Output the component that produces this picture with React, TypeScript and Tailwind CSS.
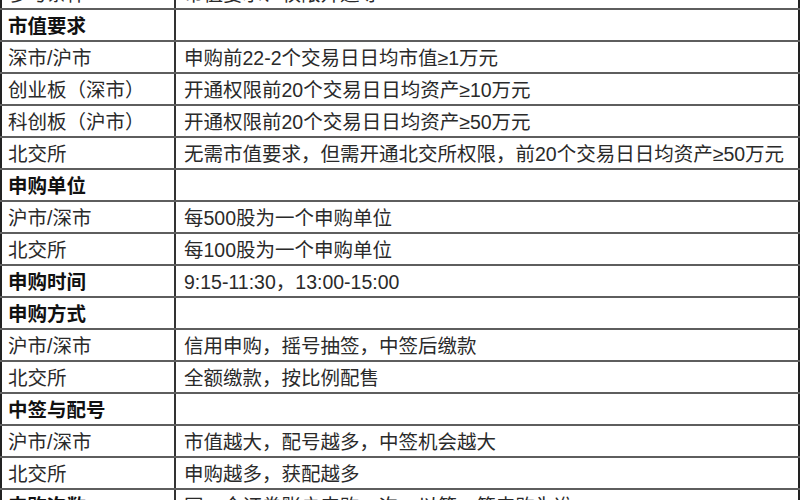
import React from "react";

type Row = { a: string; b: string; bold?: boolean };

const rows: Row[] = [
  { a: "参与条件", b: "市值要求、权限开通等" },
  { a: "市值要求", b: "", bold: true },
  { a: "深市/沪市", b: "申购前22-2个交易日日均市值≥1万元" },
  { a: "创业板（深市）", b: "开通权限前20个交易日日均资产≥10万元" },
  { a: "科创板（沪市）", b: "开通权限前20个交易日日均资产≥50万元" },
  { a: "北交所", b: "无需市值要求，但需开通北交所权限，前20个交易日日均资产≥50万元" },
  { a: "申购单位", b: "", bold: true },
  { a: "沪市/深市", b: "每500股为一个申购单位" },
  { a: "北交所", b: "每100股为一个申购单位" },
  { a: "申购时间", b: "9:15-11:30，13:00-15:00", bold: true },
  { a: "申购方式", b: "", bold: true },
  { a: "沪市/深市", b: "信用申购，摇号抽签，中签后缴款" },
  { a: "北交所", b: "全额缴款，按比例配售" },
  { a: "中签与配号", b: "", bold: true },
  { a: "沪市/深市", b: "市值越大，配号越多，中签机会越大" },
  { a: "北交所", b: "申购越多，获配越多" },
  { a: "申购次数", b: "同一个证券账户申购一次，以第一笔申购为准", bold: true },
];

export default function App() {
  return (
    <div
      className="w-[800px] h-[500px] overflow-hidden bg-white"
      style={{ fontFamily: '"Liberation Sans", "Noto Sans CJK SC", sans-serif' }}
    >
      <div className="-mt-[22px] flex flex-col">
        {rows.map((r, i) => (
          <div
            key={i}
            className="flex h-[32px] shrink-0 border-b-2 border-[#5e5e5e]"
          >
            <div
              className={
                "w-[176px] shrink-0 border-l-2 border-r-2 border-l-[#222] border-r-[#333] pl-[6px] pt-[3px] flex items-center text-[19.5px] leading-none whitespace-nowrap " +
                (r.bold ? "font-bold text-[#111]" : "text-[#2a2a2a]")
              }
            >
              {r.a}
            </div>
            <div className="flex-1 border-r-2 border-[#222] pl-[8px] pt-[3px] flex items-center text-[19.5px] leading-none text-[#2a2a2a] whitespace-nowrap overflow-hidden">
              {r.b}
            </div>
          </div>
        ))}
      </div>
    </div>
  );
}
